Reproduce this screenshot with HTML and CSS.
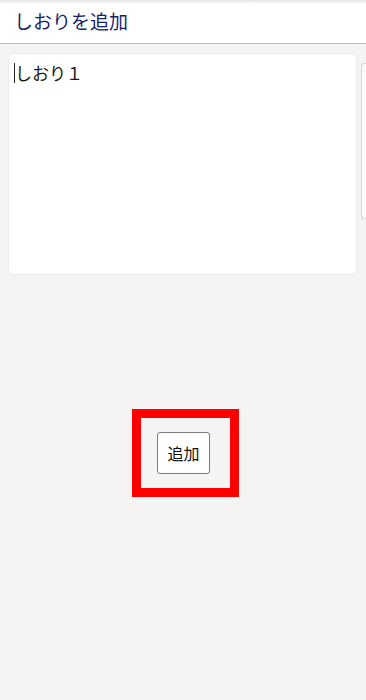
FILE: index.html
```html
<!DOCTYPE html>
<html lang="ja">
<head>
<meta charset="utf-8">
<link rel="stylesheet" href="styles.css">
</head>
<body>
<header class="header"><h1 class="title">しおりを追加</h1></header>
<main class="content">
  <div class="editor-row">
    <div class="card"><span class="caret"></span><span class="memo">しおり１</span></div>
    <div class="scroll"></div>
  </div>
  <div class="action">
    <div class="highlight"><button class="add">追加</button></div>
  </div>
</main>
</body>
</html>
```
FILE: styles.css
```css
html, body { margin: 0; padding: 0; }
body {
  width: 366px;
  height: 700px;
  background: #f5f4f2;
  font-family: "Noto Sans CJK JP", "Noto Sans", sans-serif;
  overflow: hidden;
}
.header {
  height: 43px;
  background: linear-gradient(#e6e6e6 0, #ffffff 4px, #ffffff 100%);
  border-bottom: 1px solid #bdbdbd;
  display: flex;
  align-items: center;
}
.title {
  margin: 0 0 0 14px;
  font-size: 19px;
  font-weight: normal;
  color: #1c1f6b;
  line-height: 1;
  position: relative;
  top: -1px;
}
.content { padding-top: 9px; }
.editor-row {
  display: flex;
  align-items: flex-start;
}
.card {
  margin-left: 8px;
  width: 349px;
  height: 222px;
  box-sizing: border-box;
  background: #ffffff;
  border: 1px solid #ececea;
  border-radius: 5px;
  padding: 8px 0 0 5px;
  display: flex;
  align-items: flex-start;
  font-size: 17px;
  line-height: 20px;
  color: #1a1a1a;
}
.caret {
  width: 1px;
  height: 20px;
  background: #222;
  margin-top: 1px;
}
.memo { margin-top: 1px; }
.scroll {
  margin-left: 4px;
  margin-top: 10px;
  width: 4px;
  height: 154px;
  border: 1px solid #d6d6d6;
  border-right: none;
  border-radius: 3px 0 0 3px;
  background: #fafafa;
}
.action {
  display: flex;
  padding-left: 132px;
  padding-top: 134px;
}
.highlight {
  border: 9px solid #ff0000;
  box-sizing: border-box;
  width: 107px;
  height: 88px;
  display: flex;
  align-items: flex-start;
  padding: 14px 0 0 16px;
}
.add {
  width: 53px;
  height: 42px;
  background: #ffffff;
  border: 1px solid #7a7a7a;
  border-radius: 3px;
  font-family: "Noto Sans CJK JP", sans-serif;
  font-size: 16px;
  color: #111;
  padding: 0;
}
```
